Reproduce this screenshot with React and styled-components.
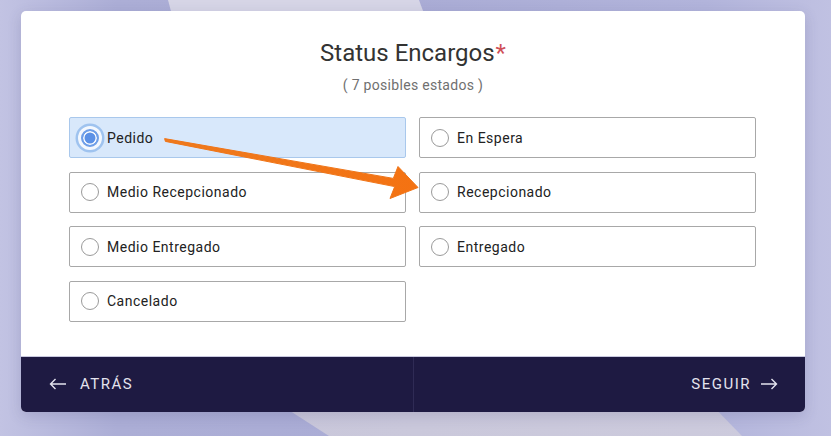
import React, { useState } from 'react'
import styled, { createGlobalStyle } from 'styled-components'

const GlobalStyle = createGlobalStyle`
  html, body {
    margin: 0;
    padding: 0;
  }
  body {
    font-family: Roboto, "Liberation Sans", sans-serif;
    background: #aeb0d8;
  }
`

const Page = styled.div`
  position: relative;
  width: 831px;
  height: 436px;
  overflow: hidden;
  box-sizing: border-box;
  padding: 11px 26px 0 21px;
  background: linear-gradient(90deg, #c2c3e3 0%, #acaed6 14%, #aaacd5 50%, #b2b4db 85%, #c0c1e2 100%);

  &::before {
    content: '';
    position: absolute;
    inset: 0;
    background: #d6d5e6;
    clip-path: polygon(168px 0, 419px 0, 430px 30px, 176px 30px);
  }

  &::after {
    content: '';
    position: absolute;
    inset: 0;
    background: linear-gradient(90deg, #c7c5d9, #cdcbdd);
    clip-path: polygon(270px 398px, 705px 398px, 742px 436px, 329px 436px);
  }
`

const Card = styled.div`
  position: relative;
  z-index: 1;
  width: 784px;
  border-radius: 5px;
  overflow: hidden;
  background: #fff;
  box-shadow: 0 4px 14px rgba(60, 60, 110, 0.18);
`

const Body = styled.div`
  padding: 29px 48px 34px 48px;
  display: flex;
  flex-direction: column;
  align-items: center;
`

const Title = styled.h2`
  margin: 0;
  font-size: 24px;
  line-height: 26px;
  font-weight: 400;
  color: #333;
`

const Required = styled.span`
  color: #cf4f57;
  margin-left: 1px;
`

const Subtitle = styled.div`
  margin-top: 10px;
  font-size: 14px;
  line-height: 18px;
  letter-spacing: 0.3px;
  color: #707070;
`

const Grid = styled.div`
  margin-top: 23px;
  width: 100%;
  display: grid;
  grid-template-columns: 337px 337px;
  column-gap: 13px;
  row-gap: 13.5px;
`

const Option = styled.label`
  height: 41px;
  box-sizing: border-box;
  display: flex;
  align-items: center;
  gap: 8px;
  padding-left: 11px;
  border-radius: 2px;
  border: 1px solid ${p => (p.$active ? '#a9c8ec' : '#a8a8a8')};
  background: ${p => (p.$active ? '#d8e8fb' : '#fff')};
  font-size: 14px;
  letter-spacing: 0.5px;
  color: #222;
  cursor: pointer;
`

const Radio = styled.span`
  width: 18px;
  height: 18px;
  box-sizing: border-box;
  border-radius: 50%;
  flex-shrink: 0;
  border: ${p => (p.$active ? '2px solid #6f9fe8' : '1.5px solid #9a9a9a')};
  background: ${p => (p.$active ? '#5c91e6' : '#fff')};
  box-shadow: ${p =>
    p.$active
      ? 'inset 0 0 0 1.5px #fff, 0 0 0 3px #f4f8fe, 0 0 0 5.5px #9fc3ef'
      : 'none'};
`

const Footer = styled.div`
  height: 55px;
  display: grid;
  grid-template-columns: 1fr 1fr;
  background: #1e1a42;
  border-top: 1px solid #c9c9df;
`

const NavButton = styled.div`
  display: flex;
  align-items: center;
  justify-content: ${p => (p.$right ? 'flex-end' : 'flex-start')};
  gap: ${p => (p.$right ? '9px' : '13px')};
  padding: 0 27px 0 28px;
  color: #e4e3ee;
  font-size: 15px;
  letter-spacing: 1.5px;
  border-left: ${p => (p.$right ? '1px solid #2f2b55' : 'none')};
`

const Pointer = styled.svg`
  position: absolute;
  left: 0;
  top: 0;
  z-index: 2;
  pointer-events: none;
`

const options = [
  'Pedido',
  'En Espera',
  'Medio Recepcionado',
  'Recepcionado',
  'Medio Entregado',
  'Entregado',
  'Cancelado',
]

function Arrow({ flip }) {
  return (
    <svg width="18" height="12" viewBox="0 0 18 12" style={flip ? { transform: 'scaleX(-1)' } : null}>
      <path d="M17 6H1.5M6.5 1L1.5 6l5 5" fill="none" stroke="#e4e3ee" strokeWidth="1.4" />
    </svg>
  )
}

export default function App() {
  const [status, setStatus] = useState('Pedido')

  return (
    <Page>
      <GlobalStyle />
      <Card>
        <Body>
          <Title>
            Status Encargos<Required>*</Required>
          </Title>
          <Subtitle>( 7 posibles estados )</Subtitle>
          <Grid>
            {options.map(o => (
              <Option key={o} $active={status === o} onClick={() => setStatus(o)}>
                <Radio $active={status === o} />
                {o}
              </Option>
            ))}
          </Grid>
        </Body>
        <Footer>
          <NavButton>
            <Arrow />
            ATRÁS
          </NavButton>
          <NavButton $right>
            SEGUIR
            <Arrow flip />
          </NavButton>
        </Footer>
      </Card>
      <Pointer width="831" height="436">
        <defs>
          <linearGradient id="arr" x1="0" y1="0" x2="1" y2="0">
            <stop offset="0" stopColor="#ee7a1e" />
            <stop offset="1" stopColor="#f47212" />
          </linearGradient>
        </defs>
        <polygon
          points="164.6,138.6 393.3,178.4 398,166.5 418,187.5 390,198.5 394.7,186.6 165.4,141.4"
          fill="url(#arr)"
          stroke="#f07518"
          strokeWidth="1"
          strokeLinejoin="round"
        />
      </Pointer>
    </Page>
  )
}
